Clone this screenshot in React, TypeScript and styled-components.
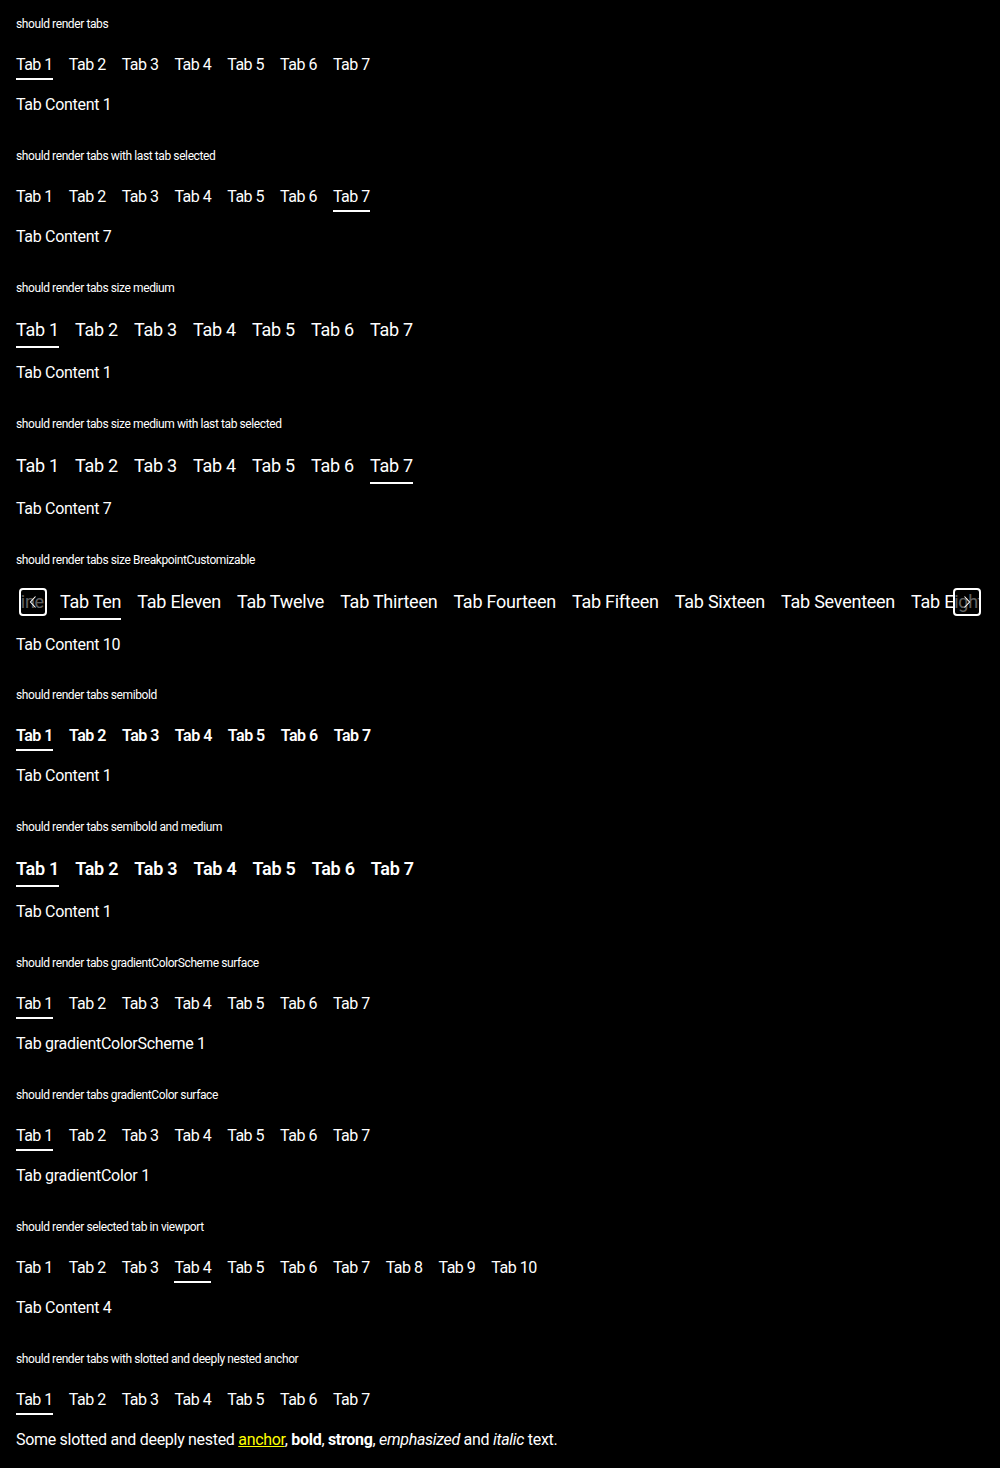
import React, { useLayoutEffect, useRef } from "react";
import styled, { createGlobalStyle, css } from "styled-components";

const GlobalStyle = createGlobalStyle`
  html, body {
    margin: 0;
    padding: 0;
    background: #000;
    color: #fff;
    font-family: Roboto, "Liberation Sans", Arial, sans-serif;
  }
`;

type Size = "small" | "medium";
type Weight = "regular" | "semibold";

const Page = styled.div`
  display: flex;
  flex-direction: column;
  padding: 16px 16px 0;
`;

const Section = styled.section<{ $tight?: boolean }>`
  display: flex;
  flex-direction: column;
  align-items: flex-start;
  margin-bottom: ${(p) => (p.$tight ? 30 : 31)}px;
`;

const Heading = styled.h2`
  margin: 0 0 20px;
  font-size: 12px;
  line-height: 16px;
  font-weight: 400;
  letter-spacing: -0.4px;
`;

const TabBar = styled.div`
  display: flex;
  gap: 16px;
`;

const Tab = styled.button<{ $size: Size; $weight: Weight; $active: boolean }>`
  flex: none;
  margin: 0;
  border: 0;
  border-bottom: 2px solid ${(p) => (p.$active ? "#fff" : "transparent")};
  background: none;
  color: #fff;
  font-family: inherit;
  white-space: nowrap;
  cursor: pointer;
  font-weight: ${(p) => (p.$weight === "semibold" ? 600 : 400)};
  ${(p) =>
    p.$size === "medium"
      ? css`
          padding: 0 0 2px;
          font-size: 18px;
          line-height: 28px;
          letter-spacing: -0.25px;
        `
      : css`
          padding: 1px 0 1px;
          font-size: 16px;
          line-height: 24px;
          letter-spacing: -0.5px;
        `}
`;

const Content = styled.p`
  margin: 13px 0 0;
  font-size: 16px;
  line-height: 24px;
  letter-spacing: -0.3px;

  a {
    color: #ffff00;
    text-decoration: underline;
  }
  b,
  strong {
    font-weight: 700;
  }
`;

const Scroller = styled.div`
  position: relative;
  align-self: stretch;
`;

const ScrollArea = styled.div`
  display: flex;
  gap: 16px;
  overflow-x: auto;
  overflow-y: hidden;
  scrollbar-width: none;
  &::-webkit-scrollbar {
    display: none;
  }
`;

const NavOverlay = styled.div<{ $side: "left" | "right" }>`
  position: absolute;
  top: 0;
  ${(p) => (p.$side === "left" ? "left: 0;" : "right: 0;")}
  display: flex;
  flex-direction: ${(p) => (p.$side === "left" ? "row" : "row-reverse")};
  height: 28px;
`;

const SolidStrip = styled.div`
  width: 3px;
  background: #000;
`;

const NavButton = styled.button`
  box-sizing: border-box;
  width: 28px;
  height: 28px;
  padding: 0;
  border: 2px solid #fff;
  border-radius: 4px;
  background: rgba(0, 0, 0, 0.62);
  color: #fff;
  display: flex;
  align-items: center;
  justify-content: center;
  cursor: pointer;
`;

const Chevron = ({ dir }: { dir: "left" | "right" }) => (
  <svg width="10" height="14" viewBox="0 0 10 14" fill="none" aria-hidden>
    <path
      d={dir === "left" ? "M7.5 1.5 L2.5 7 L7.5 12.5" : "M2.5 1.5 L7.5 7 L2.5 12.5"}
      stroke="#fff"
      strokeWidth="1.1"
    />
  </svg>
);

type Def = {
  title: string;
  tabs: string[];
  selected: number;
  size?: Size;
  weight?: Weight;
  content: React.ReactNode;
  scroller?: boolean;
};

const seven = ["Tab 1", "Tab 2", "Tab 3", "Tab 4", "Tab 5", "Tab 6", "Tab 7"];
const ten = [...seven, "Tab 8", "Tab 9", "Tab 10"];
const words = [
  "One", "Two", "Three", "Four", "Five", "Six", "Seven", "Eight", "Nine", "Ten",
  "Eleven", "Twelve", "Thirteen", "Fourteen", "Fifteen", "Sixteen", "Seventeen",
  "Eighteen", "Nineteen", "Twenty",
].map((w) => `Tab ${w}`);

const sections: Def[] = [
  { title: "should render tabs", tabs: seven, selected: 0, content: "Tab Content 1" },
  { title: "should render tabs with last tab selected", tabs: seven, selected: 6, content: "Tab Content 7" },
  { title: "should render tabs size medium", tabs: seven, selected: 0, size: "medium", content: "Tab Content 1" },
  { title: "should render tabs size medium with last tab selected", tabs: seven, selected: 6, size: "medium", content: "Tab Content 7" },
  { title: "should render tabs size BreakpointCustomizable", tabs: words, selected: 9, size: "medium", content: "Tab Content 10", scroller: true },
  { title: "should render tabs semibold", tabs: seven, selected: 0, weight: "semibold", content: "Tab Content 1" },
  { title: "should render tabs semibold and medium", tabs: seven, selected: 0, size: "medium", weight: "semibold", content: "Tab Content 1" },
  { title: "should render tabs gradientColorScheme surface", tabs: seven, selected: 0, content: "Tab gradientColorScheme 1" },
  { title: "should render tabs gradientColor surface", tabs: seven, selected: 0, content: "Tab gradientColor 1" },
  { title: "should render selected tab in viewport", tabs: ten, selected: 3, content: "Tab Content 4" },
  {
    title: "should render tabs with slotted and deeply nested anchor",
    tabs: seven,
    selected: 0,
    content: (
      <>
        Some slotted and deeply nested <a href="#">anchor</a>, <b>bold</b>, <strong>strong</strong>,{" "}
        <em>emphasized</em> and <i>italic</i> text.
      </>
    ),
  },
];

const ScrollingTabs = ({ def }: { def: Def }) => {
  const areaRef = useRef<HTMLDivElement>(null);
  const activeRef = useRef<HTMLButtonElement>(null);
  useLayoutEffect(() => {
    if (areaRef.current && activeRef.current) {
      areaRef.current.scrollLeft = activeRef.current.offsetLeft - areaRef.current.offsetLeft - 44;
    }
  }, []);
  const size = def.size ?? "small";
  const weight = def.weight ?? "regular";
  return (
    <Scroller>
      <ScrollArea ref={areaRef}>
        {def.tabs.map((t, i) => (
          <Tab
            key={t}
            ref={i === def.selected ? activeRef : undefined}
            $size={size}
            $weight={weight}
            $active={i === def.selected}
          >
            {t}
          </Tab>
        ))}
      </ScrollArea>
      <NavOverlay $side="left">
        <SolidStrip />
        <NavButton aria-label="prev">
          <Chevron dir="left" />
        </NavButton>
      </NavOverlay>
      <NavOverlay $side="right">
        <SolidStrip />
        <NavButton aria-label="next">
          <Chevron dir="right" />
        </NavButton>
      </NavOverlay>
    </Scroller>
  );
};

export default function App() {
  return (
    <>
      <GlobalStyle />
      <Page>
        {sections.map((s) => {
          const size = s.size ?? "small";
          const weight = s.weight ?? "regular";
          return (
            <Section key={s.title} $tight={s.scroller}>
              <Heading>{s.title}</Heading>
              {s.scroller ? (
                <ScrollingTabs def={s} />
              ) : (
                <TabBar>
                  {s.tabs.map((t, i) => (
                    <Tab key={t} $size={size} $weight={weight} $active={i === s.selected}>
                      {t}
                    </Tab>
                  ))}
                </TabBar>
              )}
              <Content>{s.content}</Content>
            </Section>
          );
        })}
      </Page>
    </>
  );
}
